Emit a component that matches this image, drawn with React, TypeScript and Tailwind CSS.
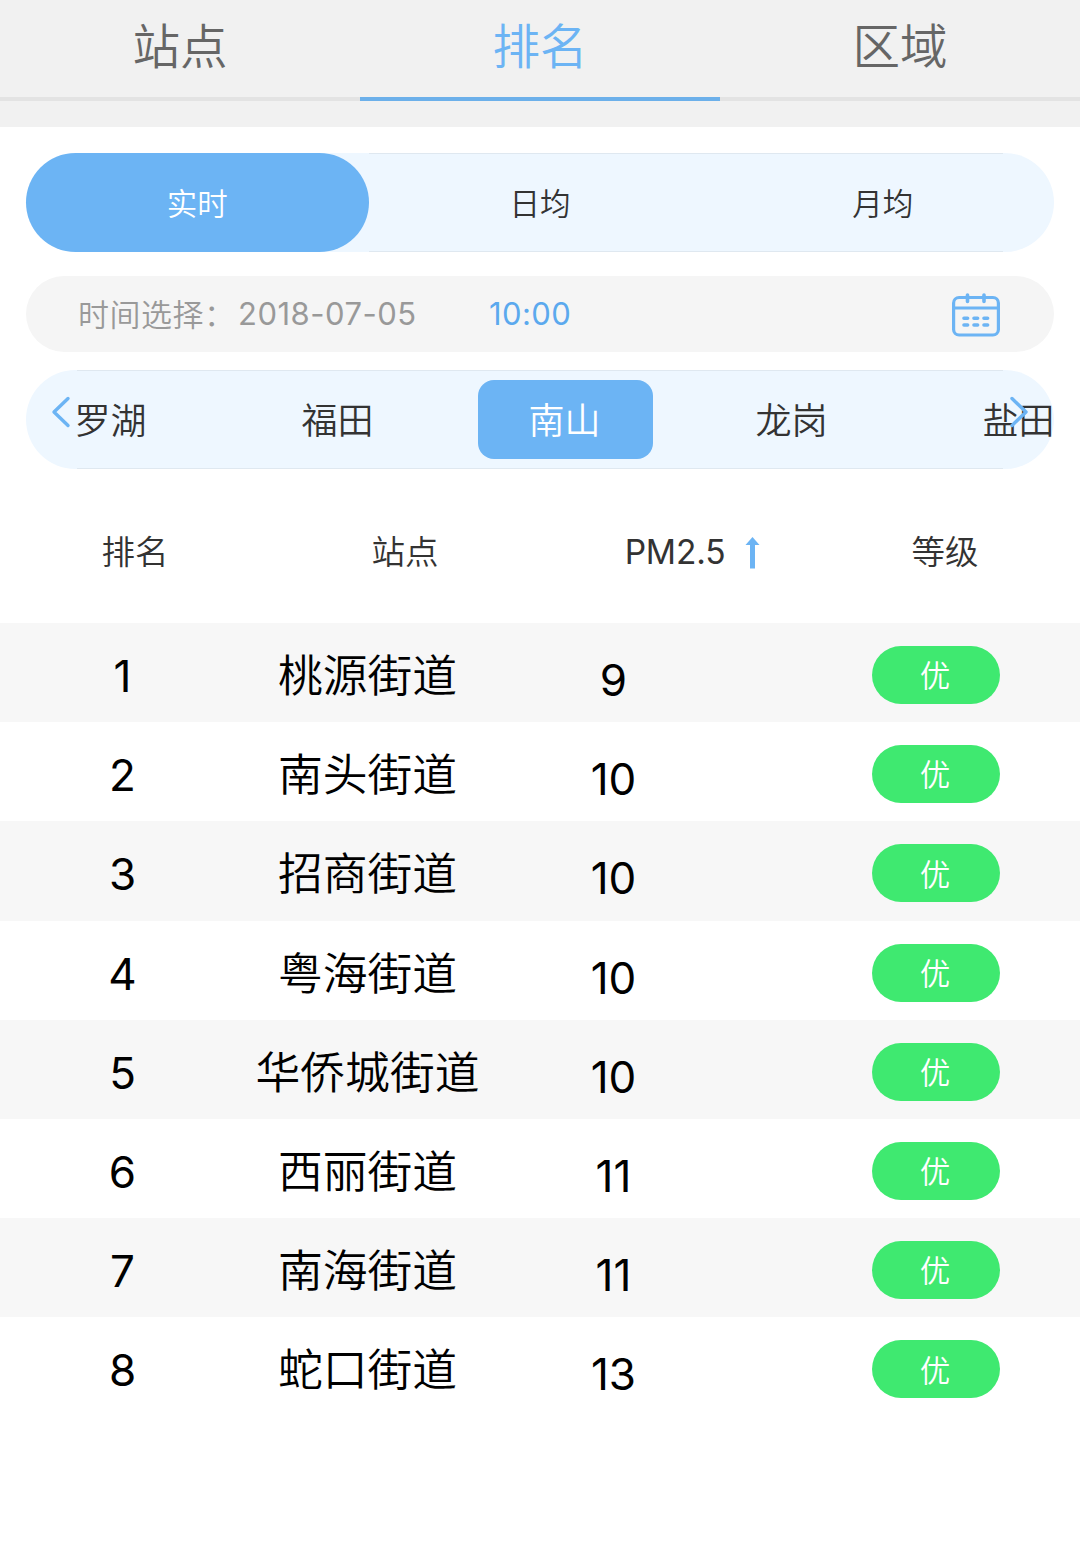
import { useState } from 'react'
import clsx from 'clsx'

const tabs = ['站点', '排名', '区域']
const periods = ['实时', '日均', '月均']
const districts = ['罗湖', '福田', '南山', '龙岗', '盐田']

const stations = [
  { name: '桃源街道', value: 9, level: '优' },
  { name: '南头街道', value: 10, level: '优' },
  { name: '招商街道', value: 10, level: '优' },
  { name: '粤海街道', value: 10, level: '优' },
  { name: '华侨城街道', value: 10, level: '优' },
  { name: '西丽街道', value: 11, level: '优' },
  { name: '南海街道', value: 11, level: '优' },
  { name: '蛇口街道', value: 13, level: '优' },
]

function CalendarIcon() {
  return (
    <svg width="48" height="46" viewBox="0 0 48 46" fill="none" stroke="#6cb4f4" strokeLinecap="round">
      <rect x="1.6" y="5.5" width="44.8" height="37.5" rx="5.5" strokeWidth="3.2" />
      <path d="M2 16H46" strokeWidth="2.8" />
      <path d="M15.5 3V9.5M32 3V9.5" strokeWidth="3.6" />
      <path
        d="M12 26.2H15.6M22 26.2H25.6M32 26.2H35.6M12 33H15.6M22 33H25.6M32 33H35.6"
        strokeWidth="3.6"
      />
    </svg>
  )
}

function Chevron({ className, d }: { className: string; d: string }) {
  return (
    <svg
      className={clsx('absolute', className)}
      width="20"
      height="32"
      viewBox="0 0 20 32"
      fill="none"
      stroke="#6cb4f4"
      strokeWidth="3.4"
      strokeLinecap="round"
      strokeLinejoin="round"
    >
      <path d={d} />
    </svg>
  )
}

export default function App() {
  const [tab, setTab] = useState(1)
  const [period, setPeriod] = useState(0)
  const [district, setDistrict] = useState(2)

  return (
    <div className="h-[1542px] w-[1080px] overflow-hidden bg-white font-['Inter','Noto_Sans_CJK_SC',sans-serif] font-[350] text-[#333]">
      <header className="h-[127px] bg-[#f1f1f1]">
        <div className="grid grid-cols-3">
          {tabs.map((label, i) => (
            <button
              key={label}
              onClick={() => setTab(i)}
              className={clsx(
                'h-[101px] border-b-4 pb-1 text-[47.5px] leading-none',
                i === tab ? 'border-[#6cb0ea] text-[#6cb4f4]' : 'border-[#e3e3e3] text-[#666]'
              )}
            >
              {label}
            </button>
          ))}
        </div>
      </header>

      <section className="px-[26px] pt-[26px]">
        <div className="relative grid h-[99px] grid-cols-3 rounded-full bg-[#eef7ff]">
          <div className="pointer-events-none absolute inset-y-0 right-[51px] left-[343px] border-y border-[#dfe8f0]" />
          {periods.map((label, i) => (
            <button
              key={label}
              onClick={() => setPeriod(i)}
              className={clsx(
                'rounded-full pt-0.5 text-[30.5px]',
                i === period && 'z-10 bg-[#6cb4f4] text-white'
              )}
            >
              {label}
            </button>
          ))}
        </div>

        <div className="mt-6 flex h-[76px] items-center rounded-full bg-[#f5f5f5] pr-[54px] pl-[52px] text-[31px] text-[#999]">
          <span className="w-[160px] pt-0.5 tracking-[0.5px] whitespace-nowrap">时间选择：</span>
          <span className="w-[251px] font-normal tracking-[0.5px]">2018-07-05</span>
          <span className="font-normal tracking-[0.4px] text-[#5ba9ee]">10:00</span>
          <span className="ml-auto pt-0.5">
            <CalendarIcon />
          </span>
        </div>

        <div className="relative mt-[18px] h-[99px] rounded-full bg-[#eef7ff]">
          <div className="pointer-events-none absolute inset-x-[51px] inset-y-0 border-y border-[#dfe8f0]" />
          <div className="-ml-[2px] flex h-full items-center gap-[52px]">
            {districts.map((label, i) => (
              <button
                key={label}
                onClick={() => setDistrict(i)}
                className={clsx(
                  'h-[79px] w-[175px] shrink-0 rounded-2xl pt-0.5 pr-0.5 text-[36px] leading-none',
                  i === district && 'bg-[#6cb4f4] text-white'
                )}
              >
                {label}
              </button>
            ))}
          </div>
          <Chevron className="top-[26px] left-[25px]" d="M17 2.5L3 16L17 29.5" />
          <Chevron className="top-[26px] right-[25px]" d="M3 2.5L17 16L3 29.5" />
        </div>
      </section>

      <div className="mt-[28px] grid h-[126px] grid-cols-4 items-center pb-4 text-center text-[33.5px]">
        <span>排名</span>
        <span>站点</span>
        <span className="relative font-normal tracking-[-0.2px]">
          PM2.5
          <svg className="absolute top-[10px] right-[50px]" width="15" height="32" viewBox="0 0 15 32" fill="#6cb4f4">
            <path d="M7.5 0L14.5 8H10V31.5H5V8H0.5Z" />
          </svg>
        </span>
        <span>等级</span>
      </div>

      <ul>
        {stations.map((s, i) => (
          <li
            key={s.name}
            className="grid h-[99.2px] grid-cols-[245px_245px_245px_1fr] items-center pt-[5px] text-center text-[44.8px] text-black odd:bg-[#f7f7f7]"
          >
            <span className="pt-0.5 text-[44px] font-normal">{i + 1}</span>
            <span className="pt-[3px] whitespace-nowrap">{s.name}</span>
            <span className="pt-2.5 pl-0.5 text-[44px] font-normal">{s.value}</span>
            <span className="ml-[137px] flex h-[58px] w-[128px] items-center justify-center rounded-full bg-[#3fe970] pt-0.5 pr-0.5 text-[30.5px] text-white">
              {s.level}
            </span>
          </li>
        ))}
      </ul>
    </div>
  )
}
